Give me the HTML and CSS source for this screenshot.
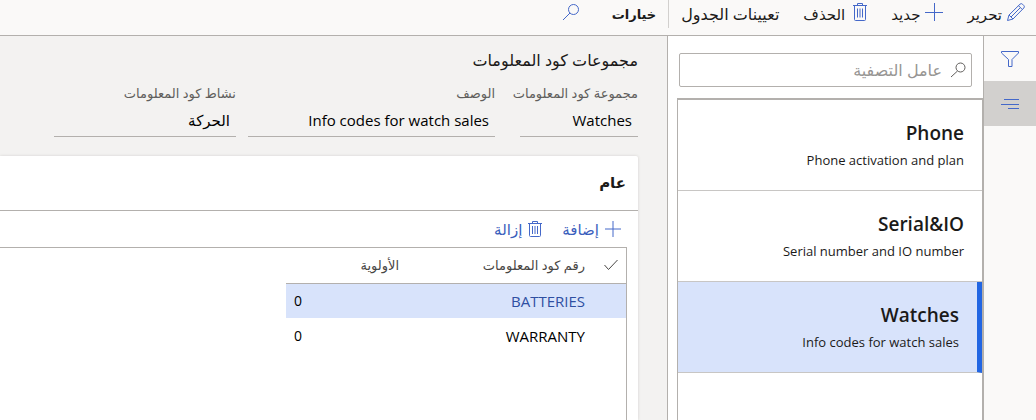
FILE: index.html
```html
<!DOCTYPE html>
<html lang="ar" dir="rtl">
<head>
<meta charset="utf-8">
<meta name="viewport" content="width=device-width, initial-scale=1">
<title>مجموعات كود المعلومات</title>
<link rel="stylesheet" href="styles.css">
</head>
<body>
<div class="app">
  <header class="toolbar">
    <button class="command" type="button">
      <svg class="icon" width="18" height="18" viewBox="0 0 18 18"><path d="M.5 17.500L2 12 13 1.200a1.800 1.800 0 0 1 2.500 0l1.300 1.300a1.800 1.800 0 0 1 0 2.500L6 16zM11.500 2.700l3.800 3.800M2 12L6 16M4 14l9.300-9.300"/></svg>
      <span>تحرير</span>
    </button>
    <button class="command" type="button">
      <svg class="icon" width="18" height="18" viewBox="0 0 18 18"><path d="M9.500 0v18M0 9.500h18"/></svg>
      <span>جديد</span>
    </button>
    <button class="command command-delete" type="button">
      <svg class="icon" width="14" height="18" viewBox="0 0 14 18"><path d="M0 2.500h14M4.500 2.500v-2h5v2M1.500 2.500v14q0 1 1 1h9q1 0 1-1v-14M4.500 5.500v9M7 5.500v9M9.500 5.500v9"/></svg>
      <span>الحذف</span>
    </button>
    <button class="command command-table" type="button">تعيينات الجدول</button>
    <button class="command command-options" type="button">خيارات</button>
    <button class="command command-search" type="button" aria-label="بحث">
      <svg class="icon" width="18" height="18" viewBox="0 0 18 18"><circle cx="11.500" cy="6.500" r="5"/><path d="M8 10L1 17"/></svg>
    </button>
  </header>

  <div class="workspace">
    <nav class="rail">
      <button class="rail-button" type="button" aria-label="تصفية">
        <svg class="icon" width="18" height="18" viewBox="0 0 18 18"><path d="M.5 1.500h17v1.500L11 9.500v7H7.500v-7L.5 3z"/></svg>
      </button>
      <button class="rail-button rail-active" type="button" aria-label="قائمة">
        <svg class="icon" width="18" height="12" viewBox="0 0 18 12"><path d="M3 1.500h15M0 6.500h18M7 10.500h11"/></svg>
      </button>
    </nav>

    <aside class="list-pane">
      <label class="filter">
        <svg class="icon" width="16" height="16" viewBox="0 0 16 16"><circle cx="10.500" cy="5.500" r="4.500"/><path d="M7.500 9L1 15"/></svg>
        <input class="filter-input" type="text" placeholder="عامل التصفية" aria-label="عامل التصفية">
      </label>
      <ul class="records">
        <li class="record"><a class="record-link" href="#phone"><strong class="record-name" dir="ltr">Phone</strong><span class="record-text" dir="ltr">Phone activation and plan</span></a></li>
        <li class="record"><a class="record-link" href="#serial"><strong class="record-name" dir="ltr">Serial&amp;IO</strong><span class="record-text" dir="ltr">Serial number and IO number</span></a></li>
        <li class="record record-selected"><a class="record-link" href="#watches"><strong class="record-name" dir="ltr">Watches</strong><span class="record-text" dir="ltr">Info codes for watch sales</span></a></li>
      </ul>
    </aside>

    <main class="details">
      <h1 class="page-title">مجموعات كود المعلومات</h1>
      <div class="fields">
        <div class="field field-group">
          <label class="field-label" for="group">مجموعة كود المعلومات</label>
          <input class="field-input" id="group" type="text" value="Watches" readonly>
        </div>
        <div class="field field-description">
          <label class="field-label" for="description">الوصف</label>
          <input class="field-input" id="description" type="text" value="Info codes for watch sales" readonly>
        </div>
        <div class="field field-activity">
          <label class="field-label" for="activity">نشاط كود المعلومات</label>
          <input class="field-input" id="activity" type="text" value="الحركة" readonly>
        </div>
      </div>

      <section class="card">
        <h2 class="card-title">عام</h2>
        <div class="card-actions">
          <button class="action" type="button">
            <svg class="icon" width="16" height="16" viewBox="0 0 16 16"><path d="M8 0v16M0 8h16"/></svg>
            <span>إضافة</span>
          </button>
          <button class="action" type="button">
            <svg class="icon" width="14" height="16" viewBox="0 0 14 16"><path d="M0 2.500h14M4.500 2.500v-2h5v2M1.500 2.500v12q0 1 1 1h9q1 0 1-1v-12M4.500 5v8M7 5v8M9.500 5v8"/></svg>
            <span>إزالة</span>
          </button>
        </div>
        <div class="grid">
          <table class="codes">
            <thead>
              <tr>
                <th class="col-check" scope="col" aria-label="تحديد"><svg class="icon" width="14" height="12" viewBox="0 0 14 12"><path d="M.5 6l4 4.500L13.500 1"/></svg></th>
                <th class="col-code" scope="col">رقم كود المعلومات</th>
                <th class="col-priority" scope="col">الأولوية</th>
              </tr>
            </thead>
            <tbody>
              <tr class="row-selected"><td></td><td><a class="code-link" href="#batteries">BATTERIES</a></td><td class="number">0</td></tr>
              <tr><td></td><td>WARRANTY</td><td class="number">0</td></tr>
            </tbody>
          </table>
        </div>
      </section>
    </main>
  </div>
</div>
</body>
</html>
```
FILE: styles.css
```css
* { box-sizing: border-box; }

body {
  margin: 0;
  font-family: "Open Sans", "Noto Sans", "DejaVu Sans", sans-serif;
  font-size: 15px;
  line-height: 20px;
  color: #1b1a19;
}

button, input { font: inherit; color: inherit; }
button { border: 0; padding: 0; background: none; cursor: pointer; }
a { color: inherit; text-decoration: none; }

.icon {
  display: block;
  flex: none;
  fill: none;
  stroke: #4468c9;
  stroke-width: 1;
}

.app { display: flex; flex-direction: column; min-height: 100vh; }

.toolbar {
  display: flex;
  height: 36px;
  padding-right: 11px;
  background: #faf9f8;
  border-bottom: 1px solid #b3b0ad;
}

.command {
  display: flex;
  align-items: center;
  gap: 5px;
  height: 28px;
  margin-left: 24px;
  white-space: nowrap;
}
.command .icon { margin-bottom: 4px; }
.command-delete { gap: 8px; }
.command-table { margin-left: 12px; font-size: 16px; }
.command-options {
  padding-right: 12px;
  margin-left: 32px;
  border-right: 1px solid #d2d0ce;
  font-size: 13px;
  font-weight: 600;
}

.workspace { display: flex; flex: 1; }

.rail { flex: none; width: 52px; background: #faf9f8; }
.rail-button {
  display: flex;
  align-items: center;
  justify-content: center;
  width: 100%;
  height: 45px;
}
.rail-active { background: #d2d0ce; }

.list-pane {
  display: flex;
  flex-direction: column;
  flex: none;
  width: 317px;
  background: #fff;
  border-left: 1px solid #b3b0ad;
  border-right: 1px solid #b3b0ad;
}
.filter {
  display: flex;
  align-items: center;
  gap: 8px;
  height: 34px;
  margin: 17px 11px 11px 11px;
  padding: 0 5px;
  border: 1px solid #b3b0ad;
  border-radius: 2px;
}
.filter .icon { stroke: #605e5c; }
.filter-input {
  flex: 1;
  min-width: 0;
  padding: 0;
  border: 0;
  outline: 0;
  background: none;
  font-size: 16px;
}
.filter-input::placeholder { color: #979593; opacity: 1; }

.records {
  flex: 1;
  margin: 0 0 0 9px;
  padding: 0;
  list-style: none;
  border-top: 2px solid #b3b0ad;
  border-left: 1px solid #b3b0ad;
  border-right: 1px solid #b3b0ad;
}
.record { border-bottom: 1px solid #c8c6c4; }
.record-link {
  display: flex;
  flex-direction: column;
  align-items: flex-start;
  gap: 5px;
  height: 90px;
  padding: 20px 18px 0;
}
.record-name { font-size: 19px; line-height: 26px; font-weight: 600; }
.record-text { font-size: 13px; line-height: 18px; }
.record-selected {
  background: #d8e3fb;
  border-right: 5px solid #2266e3;
}

.details {
  flex: 1;
  min-width: 0;
  padding-right: 29px;
  background: #f3f2f1;
  display: flex;
  flex-direction: column;
}
.page-title {
  margin: 12px 0 12px;
  font-size: 16px;
  line-height: 24px;
  font-weight: 400;
}

.fields { display: flex; gap: 12px; margin-bottom: 19px; }
.field { display: flex; flex-direction: column; gap: 1px; }
.field-label {
  font-size: 13px;
  line-height: 18px;
  color: #605e5c;
  white-space: nowrap;
}
.field-input {
  width: 100%;
  height: 34px;
  padding: 0 6px;
  border: 0;
  border-bottom: 1px solid #b3b0ad;
  border-radius: 0;
  outline: 0;
  background: none;
  color: #000;
}
.field-group { width: 131px; }
.field-group .field-input { width: 118px; }
.field-description { width: 247px; }
.field-activity { width: 182px; }

.card {
  display: flex;
  flex-direction: column;
  flex: 1;
  background: #fff;
  border-top-right-radius: 2px;
  box-shadow: 0 0 3px #d2d0ce;
}
.card-title {
  margin: 0;
  padding: 14px 12px 16px;
  border-bottom: 1px solid #b3b0ad;
  font-size: 15px;
  line-height: 24px;
  font-weight: 600;
}
.card-actions {
  display: flex;
  gap: 20px;
  height: 36px;
  padding-right: 17px;
}
.action { display: flex; align-items: center; gap: 6px; color: #3a5ebc; }
.grid {
  flex: 1;
  margin-right: 11px;
  border-top: 1px solid #b3b0ad;
  border-right: 1px solid #b3b0ad;
}
.codes { width: 340px; table-layout: fixed; border-collapse: collapse; }
.codes th, .codes td {
  height: 35px;
  padding: 0 8px;
  text-align: right;
  white-space: nowrap;
}
.codes th {
  border-bottom: 1px solid #b3b0ad;
  font-size: 13px;
  font-weight: 400;
  color: #484644;
}
.codes td { color: #000; }
.codes th .icon { stroke: #484644; }
.codes .col-check { width: 33px; }
.codes .col-code { width: 186px; }
.codes .number { text-align: left; font-size: 14px; }
.row-selected { background: #d8e3fb; }
.codes .code-link { color: #2f4fa2; }
```
